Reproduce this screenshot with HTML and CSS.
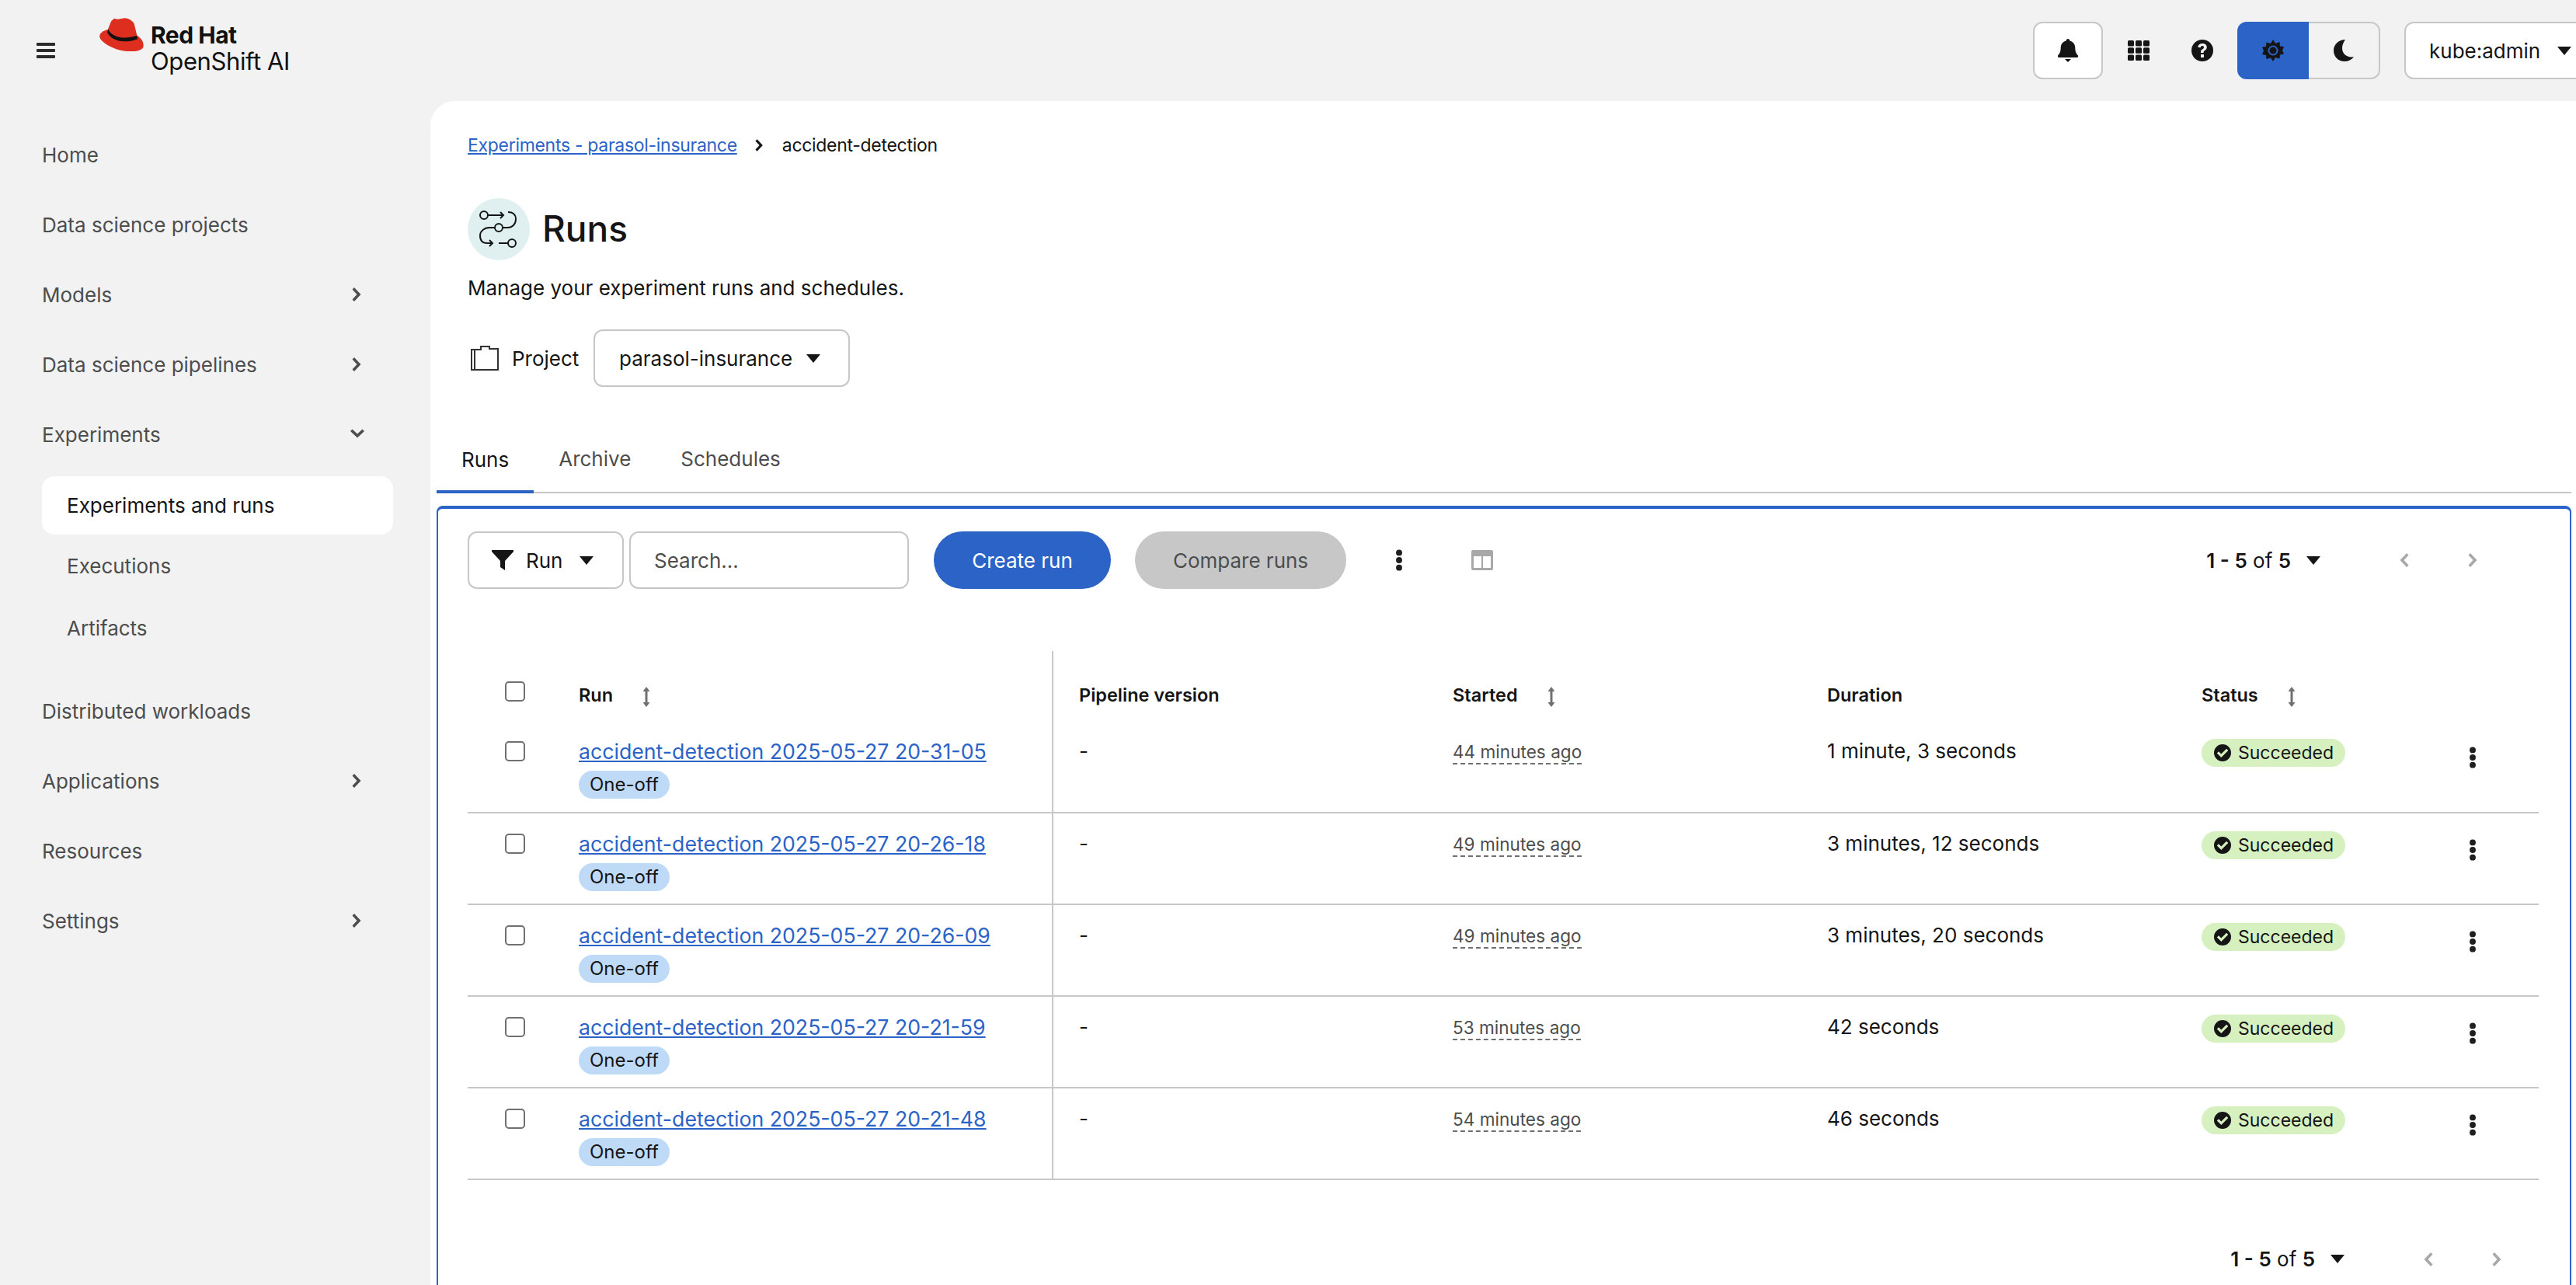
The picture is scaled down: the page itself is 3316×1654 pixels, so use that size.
FILE: index.html
```html
<!DOCTYPE html>
<html lang="en">
<head>
  <meta charset="UTF-8">
  <title>Red Hat OpenShift AI - Runs</title>
  <link rel="stylesheet" href="styles.css">
</head>
<body>
  <svg class="sprite" width="0" height="0">
    <defs>
      <symbol id="kebab" viewBox="0 0 10 32"><circle cx="5" cy="5" r="4.5"/><circle cx="5" cy="16" r="4.5"/><circle cx="5" cy="27" r="4.5"/></symbol>
      <symbol id="sort" viewBox="0 0 10 26"><path d="M5 0l4.500 6H6.500v14h3L5 26 .5 20h3V6h-3z"/></symbol>
      <symbol id="check" viewBox="0 0 24 24"><path fill-rule="evenodd" d="M12 1a11 11 0 1 1 0 22 11 11 0 0 1 0-22zM10.300 18l9-9-2.200-2.200-6.800 6.800-3.300-3.300L4.800 12.500z"/></symbol>
      <symbol id="caret" viewBox="0 0 18 11"><path d="M0 0h18L9 11z"/></symbol>
      <symbol id="chev-right" viewBox="0 0 14 20"><path d="M3 1l8.500 9L3 19 .5 16.500 6.500 10 .5 3.500z"/></symbol>
      <symbol id="chev-left" viewBox="0 0 14 20"><path d="M11 1L2.500 10l8.500 9 2.500-2.500L7.500 10l6-6.500z"/></symbol>
    </defs>
  </svg>

  <div class="page">
    <header class="topbar">
      <button class="menu-toggle" aria-label="Menu">
        <svg width="24" height="20" viewBox="0 0 24 20"><rect width="24" height="4" y="0" rx="1"/><rect width="24" height="4" y="8" rx="1"/><rect width="24" height="4" y="16" rx="1"/></svg>
      </button>
      <div class="brand">
        <svg class="brand-hat" width="57" height="43" viewBox="360 72 158 128" preserveAspectRatio="none">
          <path fill="#dd2e20" d="M413 74C425 80 435 75 450 73C465 74 480 85 484 95L494 140C510 150 518 165 517 180C515 195 500 200 470 201C430 200 385 180 365 155C355 140 362 125 390 117L402 85Z"/>
          <path fill="#111" d="M391 115C400 140 440 160 494 140L496 153C440 175 400 155 388 128Z"/>
        </svg>
        <div class="brand-text">
          <span class="brand-company">Red Hat</span>
          <span class="brand-product">OpenShift AI</span>
        </div>
      </div>
      <div class="topbar-actions">
        <button class="icon-btn bordered">
          <svg width="26" height="30" viewBox="0 0 26 30"><path d="M13 0c1.400 0 2.300 1 2.300 2.400 4.500 1 7 4.700 7 9.100 0 6 2 8 3.700 10 .5.800 0 2.500-1.500 2.500H1.500C0 24-.5 22.300 0 21.500c1.700-2 3.700-4 3.700-10 0-4.400 2.500-8.100 7-9.100C10.700 1 11.600 0 13 0zM9 26h8l-4 4z"/></svg>
        </button>
        <button class="icon-btn">
          <svg width="28" height="26" viewBox="0 0 28 26"><g><rect x="0" y="0" width="8" height="7.400" rx="1.500"/><rect x="10" y="0" width="8" height="7.400" rx="1.500"/><rect x="20" y="0" width="8" height="7.400" rx="1.500"/><rect x="0" y="9.300" width="8" height="7.400" rx="1.500"/><rect x="10" y="9.300" width="8" height="7.400" rx="1.500"/><rect x="20" y="9.300" width="8" height="7.400" rx="1.500"/><rect x="0" y="18.600" width="8" height="7.400" rx="1.500"/><rect x="10" y="18.600" width="8" height="7.400" rx="1.500"/><rect x="20" y="18.600" width="8" height="7.400" rx="1.500"/></g></svg>
        </button>
        <button class="icon-btn">
          <svg width="28" height="28" viewBox="0 0 28 28"><path fill-rule="evenodd" d="M14 0a14 14 0 1 1 0 28 14 14 0 0 1 0-28zM12 19v4h4v-4zM14 5c-3.200 0-5.500 1.700-5.800 4.800l3.500.5c.2-1.500 1-2.200 2.200-2.200 1.300 0 2.100.7 2.100 1.800 0 1-.6 1.500-1.800 2.300-1.500 1-2.200 2-2.200 3.800v1h3.600v-.7c0-1 .4-1.400 1.700-2.300 1.600-1.100 2.500-2.300 2.500-4.200C19.800 6.700 17.400 5 14 5z"/></svg>
        </button>
        <div class="theme-toggle">
          <button class="theme-btn active">
            <svg width="28" height="28" viewBox="0 0 28 28"><path fill-rule="evenodd" d="M14 0l3 5 5.500-2 .5 5.500 5 .5-2 5 2 4.500-5 1-.5 5-5.500-1.500L14 28l-3-4.500L5.500 25l-.5-5-5-1 2-4.500-2-5 5-.5.500-5.500L11 5zM14 7.500a6.500 6.500 0 1 0 0 13 6.500 6.500 0 0 0 0-13zM14 9.500a4.500 4.500 0 1 1 0 9 4.500 4.500 0 0 1 0-9z"/></svg>
          </button>
          <button class="theme-btn">
            <svg width="26" height="28" viewBox="0 0 26 28"><path d="M15 0C7 0 0 6 0 14s6 14 14 14c5 0 9-2 12-6-1 .3-2 .5-3 .5-7 0-12-5-12-11.500C11 6.500 13 3 15 0z"/></svg>
          </button>
        </div>
        <button class="user-menu">kube:admin
          <svg class="caret" width="18" height="11"><use href="#caret"/></svg>
        </button>
      </div>
    </header>

    <nav class="sidebar">
      <a class="nav-item">Home</a>
      <a class="nav-item">Data science projects</a>
      <a class="nav-item">Models <svg class="nav-chev" width="14" height="20"><use href="#chev-right"/></svg></a>
      <a class="nav-item">Data science pipelines <svg class="nav-chev" width="14" height="20"><use href="#chev-right"/></svg></a>
      <a class="nav-item">Experiments
        <svg class="nav-chev down" width="14" height="20"><use href="#chev-right"/></svg>
      </a>
      <div class="subnav">
        <a class="sub-item current">Experiments and runs</a>
        <a class="sub-item">Executions</a>
        <a class="sub-item">Artifacts</a>
      </div>
      <a class="nav-item">Distributed workloads</a>
      <a class="nav-item">Applications <svg class="nav-chev" width="14" height="20"><use href="#chev-right"/></svg></a>
      <a class="nav-item">Resources</a>
      <a class="nav-item">Settings <svg class="nav-chev" width="14" height="20"><use href="#chev-right"/></svg></a>
    </nav>

    <main class="content">
      <div class="page-head">
        <div class="breadcrumb">
          <a class="link">Experiments - parasol-insurance</a>
          <svg width="12" height="18"><use href="#chev-right"/></svg>
          <span>accident-detection</span>
        </div>
        <div class="title-row">
          <span class="title-icon">
            <svg class="outline" width="50" height="50" viewBox="0 0 50 50" stroke="#151515" stroke-width="2">
              <circle cx="6" cy="7" r="5"/><path d="M11 7h20M27 3l4 4-4 4"/>
              <path d="M37 3c8 0 10 5 10 9 0 6-4 11-11 11H30"/>
              <circle cx="25" cy="23" r="5"/>
              <path d="M20 23h-7C6 23 1 28 1 33c0 6 3 10 9 10h7M13 39l4 4-4 4"/>
              <path d="M25 43h12"/><circle cx="42" cy="43" r="5"/>
            </svg>
          </span>
          <h1>Runs</h1>
        </div>
        <p class="subtitle">Manage your experiment runs and schedules.</p>
        <div class="project-row">
          <svg class="outline" width="36" height="32" viewBox="0 0 36 32" stroke="#333" stroke-width="2"><path d="M5 5h8V1h11v3h11v27H5zM5 5H1v26h4"/></svg>
          <span class="project-label">Project</span>
          <button class="select project-select">parasol-insurance
            <svg class="caret" width="18" height="11"><use href="#caret"/></svg>
          </button>
        </div>
      </div>

      <div class="tabs">
        <a class="tab active">Runs</a>
        <a class="tab">Archive</a>
        <a class="tab">Schedules</a>
      </div>

      <section class="panel">
        <div class="toolbar">
          <button class="select filter-select">
            <svg width="28" height="28" viewBox="0 0 28 28"><path d="M0 1h28v2L17 15v12l-6-4v-8L0 3z"/></svg>
            Run
            <svg class="caret" width="18" height="11"><use href="#caret"/></svg>
          </button>
          <div class="search">Search...</div>
          <button class="btn primary">Create run</button>
          <button class="btn disabled">Compare runs</button>
          <svg class="kebab toolbar-kebab" width="10" height="28"><use href="#kebab"/></svg>
          <svg class="columns-icon" width="28" height="26" viewBox="0 0 28 26"><path fill-rule="evenodd" d="M2 0h24a2 2 0 0 1 2 2v22a2 2 0 0 1-2 2H2a2 2 0 0 1-2-2V2a2 2 0 0 1 2-2zM3 8v15h10V8zM15 8v15h10V8z"/></svg>
          <div class="pager">
            <span class="pager-text"><b>1 - 5</b> of <b>5</b></span>
            <svg class="caret" width="18" height="11"><use href="#caret"/></svg>
            <svg class="pager-prev" width="14" height="20"><use href="#chev-left"/></svg>
            <svg class="pager-next" width="14" height="20"><use href="#chev-right"/></svg>
          </div>
        </div>

        <table class="runs">
          <colgroup>
            <col class="col-check"><col class="col-run"><col class="col-pipeline"><col class="col-started"><col class="col-duration"><col class="col-status"><col class="col-action">
          </colgroup>
          <thead>
            <tr>
              <th><span class="checkbox"></span></th>
              <th class="divider">Run <svg class="sort" width="10" height="26"><use href="#sort"/></svg></th>
              <th class="pipeline">Pipeline version</th>
              <th>Started <svg class="sort" width="10" height="26"><use href="#sort"/></svg></th>
              <th>Duration</th>
              <th>Status <svg class="sort" width="10" height="26"><use href="#sort"/></svg></th>
              <th></th>
            </tr>
          </thead>
          <tbody>
            <tr>
              <td><span class="checkbox"></span></td>
              <td class="divider"><a class="link">accident-detection 2025-05-27 20-31-05</a><span class="chip">One-off</span></td>
              <td class="pipeline">-</td>
              <td><span class="time">44 minutes ago</span></td>
              <td>1 minute, 3 seconds</td>
              <td><span class="status"><svg width="24" height="24"><use href="#check"/></svg>Succeeded</span></td>
              <td><svg class="kebab" width="10" height="28"><use href="#kebab"/></svg></td>
            </tr>
            <tr>
              <td><span class="checkbox"></span></td>
              <td class="divider"><a class="link">accident-detection 2025-05-27 20-26-18</a><span class="chip">One-off</span></td>
              <td class="pipeline">-</td>
              <td><span class="time">49 minutes ago</span></td>
              <td>3 minutes, 12 seconds</td>
              <td><span class="status"><svg width="24" height="24"><use href="#check"/></svg>Succeeded</span></td>
              <td><svg class="kebab" width="10" height="28"><use href="#kebab"/></svg></td>
            </tr>
            <tr>
              <td><span class="checkbox"></span></td>
              <td class="divider"><a class="link">accident-detection 2025-05-27 20-26-09</a><span class="chip">One-off</span></td>
              <td class="pipeline">-</td>
              <td><span class="time">49 minutes ago</span></td>
              <td>3 minutes, 20 seconds</td>
              <td><span class="status"><svg width="24" height="24"><use href="#check"/></svg>Succeeded</span></td>
              <td><svg class="kebab" width="10" height="28"><use href="#kebab"/></svg></td>
            </tr>
            <tr>
              <td><span class="checkbox"></span></td>
              <td class="divider"><a class="link">accident-detection 2025-05-27 20-21-59</a><span class="chip">One-off</span></td>
              <td class="pipeline">-</td>
              <td><span class="time">53 minutes ago</span></td>
              <td>42 seconds</td>
              <td><span class="status"><svg width="24" height="24"><use href="#check"/></svg>Succeeded</span></td>
              <td><svg class="kebab" width="10" height="28"><use href="#kebab"/></svg></td>
            </tr>
            <tr>
              <td><span class="checkbox"></span></td>
              <td class="divider"><a class="link">accident-detection 2025-05-27 20-21-48</a><span class="chip">One-off</span></td>
              <td class="pipeline">-</td>
              <td><span class="time">54 minutes ago</span></td>
              <td>46 seconds</td>
              <td><span class="status"><svg width="24" height="24"><use href="#check"/></svg>Succeeded</span></td>
              <td><svg class="kebab" width="10" height="28"><use href="#kebab"/></svg></td>
            </tr>
          </tbody>
        </table>

        <div class="table-footer">
          <div class="pager">
            <span class="pager-text"><b>1 - 5</b> of <b>5</b></span>
            <svg class="caret" width="18" height="11"><use href="#caret"/></svg>
            <svg class="pager-prev" width="14" height="20"><use href="#chev-left"/></svg>
            <svg class="pager-next" width="14" height="20"><use href="#chev-right"/></svg>
          </div>
        </div>
      </section>
    </main>
  </div>
</body>
</html>
```

FILE: styles.css
```css
html,
body {
  margin: 0;
  padding: 0;
  height: 100%;
  overflow: hidden;
}

body {
  font-family: "Inter", "Noto Sans", sans-serif;
  font-size: 26px;
  color: #151515;
  background-color: #f2f2f2;
}

.sprite {
  position: absolute;
}

button {
  font: inherit;
  color: inherit;
  border: none;
  background: none;
  padding: 0;
}

svg {
  fill: currentColor;
  flex: none;
}

svg.outline {
  fill: none;
}

.page {
  display: grid;
  grid-template-columns: 554px 1fr;
  grid-template-rows: 130px 1fr;
  height: 100vh;
}

/* top bar */
.topbar {
  grid-column: 1 / 3;
  display: flex;
  align-items: center;
  padding-left: 47px;
}

.menu-toggle {
  display: flex;
  color: #2b2b2b;
}

.brand {
  display: flex;
  align-items: flex-start;
  margin-left: 57px;
  margin-top: -13px;
  height: 72px;
}

.brand-hat {
  margin-right: 9px;
}

.brand-text {
  display: flex;
  flex-direction: column;
  margin-top: 6px;
  color: #111;
  line-height: 33px;
}

.brand-company {
  font-size: 30px;
  font-weight: 700;
  letter-spacing: -0.5px;
}

.brand-product {
  font-size: 31px;
  letter-spacing: -0.4px;
}

.topbar-actions {
  display: flex;
  align-items: center;
  margin-left: auto;
  margin-right: -20px;
}

.icon-btn {
  width: 82px;
  height: 74px;
  display: flex;
  align-items: center;
  justify-content: center;
  color: #151515;
}

.icon-btn.bordered {
  width: 90px;
  margin-right: 5px;
  background-color: #fff;
  border: 2px solid #c7c7c7;
  border-radius: 12px;
  box-sizing: border-box;
}

.theme-toggle {
  display: flex;
  margin-left: 4px;
}

.theme-btn {
  width: 92px;
  height: 74px;
  display: flex;
  align-items: center;
  justify-content: center;
  box-sizing: border-box;
  border: 2px solid #c7c7c7;
  border-left: none;
  border-radius: 0 12px 12px 0;
}

.theme-btn.active {
  background-color: #2b63c6;
  border: none;
  border-radius: 12px 0 0 12px;
}

.user-menu {
  width: 241px;
  height: 74px;
  margin-left: 31px;
  padding-left: 30px;
  display: flex;
  align-items: center;
  gap: 22px;
  box-sizing: border-box;
  background-color: #fff;
  border: 2px solid #c7c7c7;
  border-radius: 12px;
}

/* sidebar */
.sidebar {
  display: flex;
  flex-direction: column;
  padding: 24px 48px 0 54px;
  color: #4d4d4d;
}

.nav-item {
  height: 90px;
  display: flex;
  align-items: center;
  justify-content: space-between;
  padding-right: 29px;
  flex: none;
}

.nav-chev {
  color: #4d4d4d;
  margin-right: 10px;
}

.nav-chev.down {
  transform: rotate(90deg);
}

.subnav {
  display: flex;
  flex-direction: column;
  margin-top: 9px;
  margin-bottom: 22px;
}

.sub-item {
  height: 80px;
  display: flex;
  align-items: center;
  padding-left: 32px;
}

.sub-item.current {
  height: 75px;
  background-color: #fff;
  border-radius: 16px;
  color: #151515;
}

/* main area */
.content {
  background-color: #fff;
  border-top-left-radius: 32px;
  padding: 0 6px 0 8px;
  overflow: hidden;
}

.page-head {
  padding: 39px 0 0 40px;
}

.link {
  color: #2b63c6;
  text-decoration: underline;
}

.breadcrumb {
  display: flex;
  align-items: center;
  gap: 23px;
  height: 36px;
  font-size: 23px;
  letter-spacing: -0.3px;
}

.title-row {
  display: flex;
  align-items: center;
  gap: 16px;
  margin-top: 50px;
}

.title-icon {
  width: 80px;
  height: 80px;
  border-radius: 50%;
  background-color: #e0f0f0;
  display: flex;
  align-items: center;
  justify-content: center;
}

h1 {
  margin: -3px 0 0;
  font-size: 46px;
  font-weight: 500;
}

.subtitle {
  margin: 15px 0 0;
  line-height: 42px;
}

.project-row {
  display: flex;
  align-items: center;
  margin-top: 32px;
  padding-left: 4px;
}

.project-label {
  margin: 0 15px 0 17px;
  width: 90px;
}

.select {
  height: 74px;
  display: flex;
  align-items: center;
  box-sizing: border-box;
  background-color: #fff;
  border: 2px solid #c7c7c7;
  border-radius: 12px;
}

.project-select {
  width: 330px;
  padding-left: 31px;
  gap: 18px;
}

.tabs {
  display: flex;
  margin-top: 50px;
  height: 87px;
  box-sizing: border-box;
  border-bottom: 2px solid #c7c7c7;
}

.tab {
  padding: 0 32px;
  display: flex;
  align-items: center;
  color: #4d4d4d;
  position: relative;
}

.tab.active {
  color: #151515;
  box-shadow: inset 0 -4px 0 #2b63c6;
  margin-bottom: -2px;
}

/* runs panel */
.panel {
  margin: 16px 0 0;
  height: 1100px;
  box-sizing: border-box;
  border: 2px solid #2b63c6;
  border-top-width: 4px;
  border-radius: 8px;
  padding: 29px 40px 0 38px;
}

.toolbar {
  display: flex;
  align-items: center;
  height: 74px;
}

.filter-select {
  width: 201px;
  padding-left: 29px;
  gap: 16px;
}

.filter-select .caret {
  margin-left: 6px;
}

.search {
  width: 360px;
  height: 74px;
  margin-left: 7px;
  padding-left: 30px;
  display: flex;
  align-items: center;
  box-sizing: border-box;
  border: 2px solid #c7c7c7;
  border-radius: 12px;
  color: #4d4d4d;
}

.btn {
  height: 74px;
  border-radius: 37px;
}

.btn.primary {
  width: 228px;
  margin-left: 32px;
  background-color: #2b63c6;
  color: #fff;
}

.btn.disabled {
  width: 272px;
  margin-left: 31px;
  background-color: #c7c7c7;
  color: #4d4d4d;
}

.kebab {
  color: #1f1f1f;
}

.toolbar-kebab {
  margin-left: 63px;
}

.columns-icon {
  margin-left: 88px;
  color: #a8a8a8;
}

.toolbar .pager {
  margin-left: auto;
  margin-right: 77px;
}

.pager {
  display: flex;
  align-items: center;
}

.pager-text b {
  font-weight: 600;
}

.pager .caret {
  margin-left: 20px;
}

.pager-prev,
.pager-next {
  color: #a8a8a8;
}

.pager-prev {
  margin-left: 100px;
}

.pager-next {
  margin-left: 76px;
}

/* table */
.runs {
  width: 2666px;
  margin-top: 80px;
  table-layout: fixed;
  border-collapse: collapse;
}

.col-check { width: 143px; }
.col-run { width: 610px; }
.col-pipeline { width: 515px; }
.col-started { width: 482px; }
.col-duration { width: 482px; }
.col-status { width: 300px; }
.col-action { width: 134px; }

.runs th {
  height: 90px;
  padding: 40px 0 0;
  box-sizing: border-box;
  text-align: left;
  vertical-align: top;
  font-size: 23.500px;
  font-weight: 600;
  line-height: 34px;
}

.runs th:first-child,
.runs td:first-child {
  padding-left: 48px;
}

.runs td {
  height: 118px;
  padding: 21px 0 0;
  box-sizing: border-box;
  vertical-align: top;
  line-height: 36px;
  border-bottom: 2px solid #c7c7c7;
}

.runs td .link {
  font-size: 26.700px;
}

.runs .divider {
  border-right: 2px solid #c7c7c7;
}

.runs .pipeline {
  padding-left: 33px;
}

.sort {
  color: #707070;
  margin-left: 32px;
  vertical-align: middle;
}

.checkbox {
  display: block;
  width: 26px;
  height: 26px;
  box-sizing: border-box;
  border: 2px solid #707070;
  border-radius: 5px;
  background-color: #fff;
}

th .checkbox {
  margin-top: -1px;
}

td .checkbox {
  margin-top: 5px;
}

.chip {
  display: block;
  width: fit-content;
  height: 36px;
  margin-top: 6px;
  padding: 0 14px;
  border-radius: 18px;
  background-color: #bfdaf7;
  font-size: 24px;
  line-height: 36px;
}

.time {
  font-size: 22.600px;
  color: #4d4d4d;
  border-bottom: 2px dashed #707070;
  padding-bottom: 1px;
}

.status {
  display: flex;
  align-items: center;
  gap: 8px;
  width: fit-content;
  height: 36px;
  padding: 0 15px;
  margin-top: 2px;
  border-radius: 18px;
  background-color: #d6f0c0;
  font-size: 23px;
}

.runs td:last-child {
  padding-left: 44px;
  padding-top: 33px;
}

.table-footer {
  display: flex;
  justify-content: flex-end;
  margin-top: 86px;
  padding-right: 46px;
}
```
